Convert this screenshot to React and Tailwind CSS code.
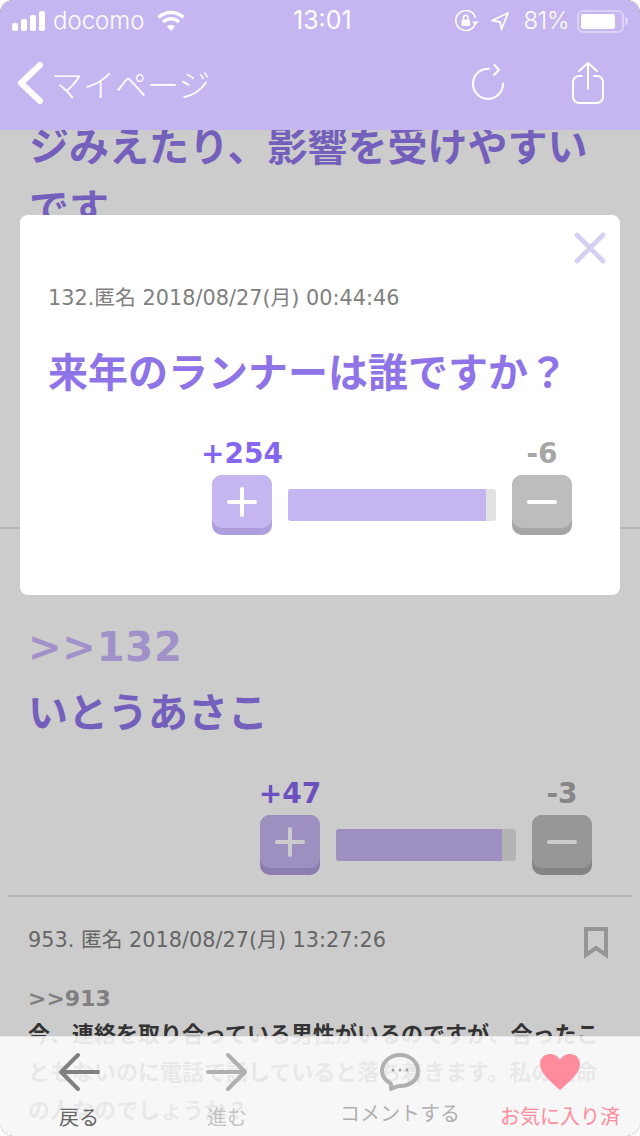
import React from "react";
import { X } from "lucide-react";

const jpFont = "font-['DejaVu_Sans','Noto_Sans_CJK_JP',sans-serif]";

const VoteButton = ({ top, bottom, children }) => (
  <div className={`w-[60px] h-[60px] rounded-[10px] ${bottom}`}>
    <div className={`h-[53px] rounded-[10px] flex items-center justify-center ${top}`}>
      {children}
    </div>
  </div>
);

const VoteRow = ({ plus, minus, barWidth, fillWidth, plusColor, minusColor }) => (
  <div className="flex items-end justify-end gap-4 pr-12">
    <div className="w-[60px] flex flex-col items-center">
      <span className={`text-[28px] leading-[42px] font-bold whitespace-nowrap ${plusColor}`}>{plus}</span>
      <VoteButton top="bg-[#c5b5f0]" bottom="bg-[#ae9ddc]">
        <svg width="30" height="30" viewBox="0 0 30 30" stroke="#fff" strokeWidth="4" strokeLinecap="round">
          <path d="M15 2v26M2 15h26" />
        </svg>
      </VoteButton>
    </div>
    <div className={`h-8 mb-[14px] rounded-[3px] bg-[#e2e2e2] overflow-hidden ${barWidth}`}>
      <div className={`h-full bg-[#c5b5f0] ${fillWidth}`} />
    </div>
    <div className="w-[60px] flex flex-col items-center">
      <span className={`text-[28px] leading-[42px] font-bold whitespace-nowrap ${minusColor}`}>{minus}</span>
      <VoteButton top="bg-[#bdbdbd]" bottom="bg-[#a6a6a6]">
        <svg width="30" height="30" viewBox="0 0 30 30" stroke="#fff" strokeWidth="4" strokeLinecap="round">
          <path d="M2 15h26" />
        </svg>
      </VoteButton>
    </div>
  </div>
);

const StatusBar = () => (
  <div className="h-[42px] pl-3 pr-[12px] flex items-center text-white font-['Inter',sans-serif] font-light text-[24px]">
    <div className="flex items-center gap-[8px] w-[281px]">
      <div className="flex items-end gap-[3px] h-5">
        <span className="w-[6px] h-2 rounded-[2px] bg-white" />
        <span className="w-[6px] h-3 rounded-[2px] bg-white" />
        <span className="w-[6px] h-4 rounded-[2px] bg-white" />
        <span className="w-[6px] h-5 rounded-[2px] bg-white" />
      </div>
      <span>docomo</span>
      <svg width="28" height="22" viewBox="0 0 28 22" className="ml-[4px]" fill="none" stroke="#fff" strokeWidth="3.4">
        <path d="M1.5 7.5a18 18 0 0 1 25 0" />
        <path d="M6 12a11.5 11.5 0 0 1 16 0" />
        <path d="M14 21l-4-4.6a5.6 5.6 0 0 1 8 0z" fill="#fff" stroke="none" />
      </svg>
    </div>
    <span className="font-normal text-[25px]">13:01</span>
    <div className="flex-1 flex items-center justify-end">
      <svg width="24" height="22" viewBox="0 0 24 22" fill="none" stroke="#fff" strokeWidth="1.6">
        <path d="M20.500 13a10 10 0 1 1 0-5" />
        <path d="M24 11.500l-3.500 3.500-3.500-3.500z" fill="#fff" stroke="none" />
        <rect x="6.500" y="9.500" width="8.500" height="6.500" rx="1" fill="#fff" stroke="none" />
        <path d="M8.500 9.500V7.600a2.200 2.200 0 0 1 4.400 0v1.900" />
      </svg>
      <svg width="20" height="20" viewBox="0 0 20 20" className="ml-[11px]" fill="none" stroke="#fff" strokeWidth="1.8" strokeLinejoin="round">
        <path d="M18 2L2 9.500l8 1.500 1.500 7.500z" />
      </svg>
      <span className="ml-[14px] text-[24px] tracking-[-0.4px]">81%</span>
      <div className="w-[47px] h-[23px] ml-[8px] rounded-[6px] border-2 border-white/40 p-[2px]">
        <div className="h-full w-[86%] rounded-[2px] bg-white" />
      </div>
      <span className="w-[3px] h-2 ml-[1px] rounded-r bg-white/40" />
    </div>
  </div>
);

const Header = () => (
  <header className="relative z-30 h-[130px] bg-[#c5b5f0] shrink-0">
    <StatusBar />
    <div className="h-[82px] pl-4 pr-[35px] flex items-center text-white">
      <svg width="28" height="44" viewBox="0 0 28 44" fill="none" stroke="#fff" strokeWidth="6" strokeLinecap="round" strokeLinejoin="round">
        <path d="M24 4L5 22l19 18" />
      </svg>
      <span className="ml-[7px] text-[32px] font-light leading-none font-['Noto_Sans_CJK_JP',sans-serif]">マイページ</span>
      <svg width="36" height="38" viewBox="0 0 36 38" className="ml-auto -mt-[1px]" fill="none" stroke="#fff" strokeWidth="2" strokeLinecap="round" strokeLinejoin="round">
        <path d="M33 19.500A15 15 0 1 1 19 4.800" />
        <path d="M24.500 1l4.500 5-5 5" />
      </svg>
      <svg width="34" height="44" viewBox="0 0 34 44" className="ml-[65px]" fill="none" stroke="#fff" strokeWidth="2" strokeLinecap="round" strokeLinejoin="round">
        <path d="M17 28V2M8 10l9-8 9 8" />
        <path d="M11 15H8a6 6 0 0 0-6 6v15a6 6 0 0 0 6 6h18a6 6 0 0 0 6-6V21a6 6 0 0 0-6-6h-3" />
      </svg>
    </div>
  </header>
);

const Thread = () => (
  <main className="bg-white -mt-[14px]">
    <section className="h-[413px] pl-[29px] pr-[19px] mx-0 border-b-2 border-[#e2e2e2]">
      <p className="text-[40px] leading-[62px] font-bold text-[#9278ec]">
        ジみえたり、影響を受けやすいです
      </p>
    </section>
    <section className="mx-2 h-[368px] border-b-2 border-[#e2e2e2]">
      <div className="pt-[89px]" />
      <p className="-mt-[2px] px-[20px] text-[40px] leading-[62px] font-bold text-[#c8b6fa] tracking-[0.8px]">&gt;&gt;132</p>
      <p className="px-[20px] text-[40px] leading-[70px] font-bold text-[#9278ec]">いとうあさこ</p>
      <div className="mt-[25px] -mr-2">
        <VoteRow
          plus="+47"
          minus="-3"
          barWidth="w-[180px]"
          fillWidth="w-[92%]"
          plusColor="text-[#8566ee]"
          minusColor="text-[#a8a8a8]"
        />
      </div>
    </section>
    <section className="pl-[28px] pr-[29px] pt-[25px]">
      <div className="flex items-start justify-between">
        <span className="text-[20.8px] leading-[36px] text-[#808080]">953. 匿名 2018/08/27(月) 13:27:26</span>
        <svg width="24" height="32" viewBox="0 0 24 32" fill="none" stroke="#bbb" strokeWidth="4" className="mt-[5px] mr-[3px]">
          <path d="M2 2h20v26l-10-7-10 7z" />
        </svg>
      </div>
      <p className="mt-[23px] text-[22px] leading-[34px] font-bold text-[#a0a0a0]">&gt;&gt;913</p>
      <p className="text-[22px] leading-[38px] font-bold text-[#404040]">
        今、連絡を取り合っている男性がいるのですが、合ったこともないのに電話で話していると落ち着きます。私の運命の人なのでしょうか？
      </p>
    </section>
  </main>
);

const VoteModal = () => (
  <div className="absolute inset-0 z-20 bg-black/20 flex items-start justify-center pt-[215px]">
    <div className="relative w-[600px] h-[380px] rounded-lg bg-white pt-[66px]">
      <X className="absolute top-[7px] right-[4px] text-[#d8cff5]" size={52} strokeWidth={2.2} />
      <p className="pl-[28px] text-[20.8px] leading-[34px] text-[#808080]">132.匿名 2018/08/27(月) 00:44:46</p>
      <p className="pl-[28px] mt-[29px] text-[40px] leading-[58px] font-bold text-[#8e74e6] whitespace-nowrap">
        来年のランナーは誰ですか？
      </p>
      <div className="mt-[31px]">
        <VoteRow
          plus="+254"
          minus="-6"
          barWidth="w-[208px]"
          fillWidth="w-[95%]"
          plusColor="text-[#8566ee]"
          minusColor="text-[#a6a6a6]"
        />
      </div>
    </div>
  </div>
);

const TabItem = ({ icon, label, color, labelClass }) => (
  <div className="flex flex-col items-center">
    <div className="h-[62px] flex items-center justify-center">{icon}</div>
    <span className={`text-[20px] leading-[28px] whitespace-nowrap ${color} ${labelClass}`}>{label}</span>
  </div>
);

const TabBar = () => (
  <nav className="absolute left-0 right-0 bottom-0 z-30 h-[100px] bg-[#fcfcfc]/90 border-t border-black/5 pt-[4px] grid grid-cols-[158px_138px_208px_112px]">
    <TabItem
      label="戻る"
      color="text-[#666]"
      labelClass="mt-[1px]"
      icon={
        <svg width="42" height="40" viewBox="0 0 42 40" fill="none" stroke="#808080" strokeWidth="4" strokeLinecap="round" strokeLinejoin="round">
          <path d="M40 20H3M20 3L3 20l17 17" />
        </svg>
      }
    />
    <TabItem
      label="進む"
      color="text-[#c4c4c4]"
      labelClass="mt-[1px]"
      icon={
        <svg width="42" height="40" viewBox="0 0 42 40" fill="none" stroke="#b0b0b0" strokeWidth="4" strokeLinecap="round" strokeLinejoin="round">
          <path d="M2 20h37M22 3l17 17-17 17" />
        </svg>
      }
    />
    <TabItem
      label="コメントする"
      color="text-[#b0b0b0]"
      labelClass="-mt-[3px]"
      icon={
        <svg width="42" height="40" viewBox="0 0 42 40" fill="none">
          <path d="M21 3c10 0 18 7 18 16s-8 15-18 15c-2 0-5 1-9 3 0-3 1-5-1-6-5-3-8-7-8-12C3 10 11 3 21 3z" stroke="#b0b0b0" strokeWidth="4" strokeLinejoin="round" />
          <circle cx="14" cy="18" r="1.500" fill="#a0a0a0" />
          <circle cx="21" cy="18" r="1.500" fill="#a0a0a0" />
          <circle cx="28" cy="18" r="1.500" fill="#a0a0a0" />
        </svg>
      }
    />
    <TabItem
      label="お気に入り済"
      color="text-[#ff8c9c]"
      labelClass="mt-0"
      icon={
        <svg width="42" height="38" viewBox="0 0 42 38" fill="#ff8c9c">
          <path d="M21 37C10 27 1 20 1 11 1 5 5.500 1 11 1c4 0 8 2 10 6 2-4 6-6 10-6 5.500 0 10 4 10 10 0 9-9 16-20 26z" />
        </svg>
      }
    />
  </nav>
);

const App = () => {
  return (
    <div className={`relative w-[640px] h-[1136px] overflow-hidden rounded-[14px] bg-black ${jpFont}`}>
      <div className="h-full overflow-hidden bg-white">
        <Header />
        <Thread />
      </div>
      <VoteModal />
      <TabBar />
    </div>
  );
};

export default App;
